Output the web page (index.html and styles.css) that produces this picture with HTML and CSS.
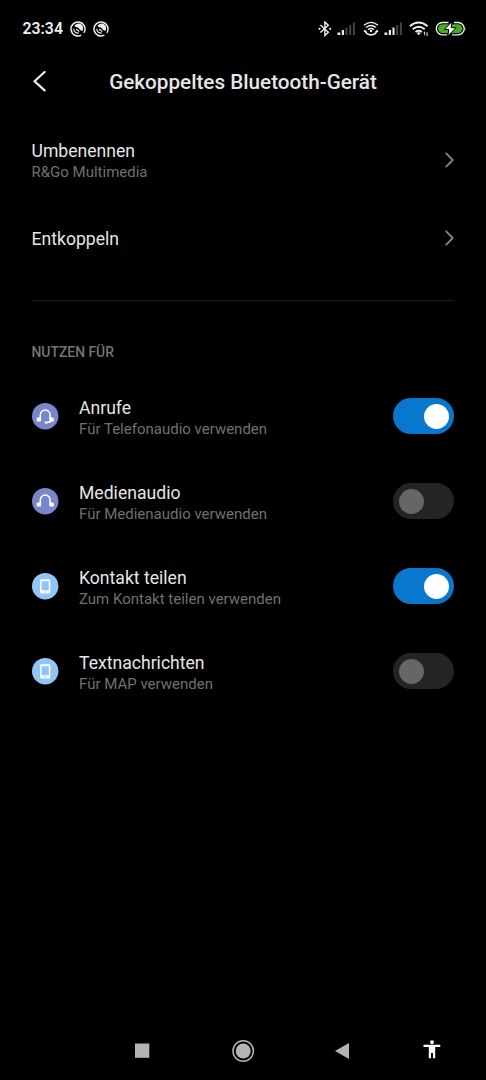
FILE: index.html
```html
<!DOCTYPE html>
<html lang="de">
<head>
<meta charset="utf-8">
<title>Gekoppeltes Bluetooth-Gerät</title>
<link rel="stylesheet" href="styles.css">
</head>
<body>
<div class="screen">
  <div class="status">
    <span class="clock">23:34</span>
    <svg class="app-mark" width="16" height="16" viewBox="0 0 16 16" fill="none" stroke="#eee"><path d="M11.300 14.200A7 7 0 1 1 13.900 11.800" stroke-width="1.500"/><path d="M4.500 4.700A4.700 4.700 0 0 1 12.400 9.900L10.500 9.300L8 6.600L6 6.200Z" fill="#eee" stroke="none"/><path d="M3.700 7.800C3.900 10.400 5.800 12.200 8.800 12.200M6 8.600L7.500 8.800L9.200 10.700" stroke-width="1.200"/></svg>
    <svg class="app-mark" width="16" height="16" viewBox="0 0 16 16" fill="none" stroke="#eee"><path d="M11.300 14.200A7 7 0 1 1 13.900 11.800" stroke-width="1.500"/><path d="M4.500 4.700A4.700 4.700 0 0 1 12.400 9.900L10.500 9.300L8 6.600L6 6.200Z" fill="#eee" stroke="none"/><path d="M3.700 7.800C3.900 10.400 5.800 12.200 8.800 12.200M6 8.600L7.500 8.800L9.200 10.700" stroke-width="1.200"/></svg>
    <div class="indicators">
      <svg width="14" height="16" viewBox="0 0 14 16" fill="none" stroke="#eee" stroke-width="1.400"><path d="M2.400 4L10.300 11.300L6.900 14.500V1L10.300 4.200L2.400 11.500"/><circle cx="1.500" cy="7.800" r="1.100" fill="#eee" stroke="none"/><circle cx="12.200" cy="7.800" r="1.100" fill="#eee" stroke="none"/></svg>
      <svg class="gap-a" width="19" height="16" viewBox="0 0 19 16"><path d="M0.500 11.500h2.800v2.500h-2.800zM4.800 9h2.200v5H4.800z" fill="#eee"/><path d="M8.500 6.500h2v7.500H8.500zM12.200 4h2v10h-2zM15.900 1.500h2v12.500h-2z" fill="#444"/></svg>
      <svg class="gap-b" width="16" height="16" viewBox="0 0 16 16" fill="none" stroke="#eee" stroke-width="1.300"><path d="M1 4.200Q8-1.600 15 4.200M3 6.600Q8 2.300 13 6.600M5 8.800Q8 6.200 11 8.800"/><circle cx="8" cy="9.900" r="1.200" fill="#eee" stroke="none"/><path d="M2 9.800Q3.500 13.900 8 13.900T14 9.800" stroke-width="1.700"/><path d="M.5 11L1.600 8.700L4.200 10.500ZM15.500 11L14.400 8.700L11.800 10.500Z" fill="#eee" stroke="none"/></svg>
      <svg class="gap-c" width="19" height="16" viewBox="0 0 19 16"><path d="M0.500 11.500h2.800v2.500h-2.800zM4.800 9h2.200v5H4.800zM8.500 6.500h2v7.500H8.500z" fill="#eee"/><path d="M12.200 4h2v10h-2zM15.900 1.500h2v12.500h-2z" fill="#444"/></svg>
      <svg class="gap-d" width="20" height="16" viewBox="0 0 20 16" fill="none" stroke="#eee" stroke-width="1.900"><path d="M.8 5.200Q9.700-2.300 18.600 5.200M3.700 8.200Q9.700 3.300 15.700 8.200M6.500 11Q9.700 8.500 12.900 11"/><path d="M9.700 14.300L7.600 12Q9.700 10.400 11.800 12Z" fill="#eee" stroke="none"/><path d="M15.600 10.700v3.600M14.800 12l.8-1M18 11v3.800M18 14.600l.9-1" stroke-width=".9"/></svg>
      <svg class="gap-e" width="32" height="16" viewBox="0 0 32 16"><path d="M13.500 1.500H7.500a6.200 6.200 0 0 0 0 12.400H12.500M19 1.500h4a6.200 6.200 0 0 1 0 12.400H17" fill="none" stroke="#eee" stroke-width="1.400"/><path d="M7.500 3.300a4.400 4.400 0 0 0 0 8.800h15.500a4.400 4.400 0 0 0 0-8.800Z" fill="#47ad1f"/><path d="M17 .5L9.500 8.400H13.800L12.800 15L21 6.700H16.200Z" fill="#fff" stroke="#000" stroke-width="1"/><path d="M29.800 5.500a5 5 0 0 1 0 4.400Z" fill="#eee"/></svg>
    </div>
  </div>
  <header class="header">
    <svg class="back" width="16" height="22" viewBox="0 0 16 22"><path d="M12.600 1L2.500 10.200L12.600 19.400" fill="none" stroke="#eee" stroke-width="2.200" stroke-linecap="round" stroke-linejoin="round"/></svg>
    <h1 class="title">Gekoppeltes Bluetooth-Gerät</h1>
  </header>
  <div class="row row-rename">
    <div class="label"><div class="name">Umbenennen</div><div class="detail">R&amp;Go Multimedia</div></div>
    <svg class="chevron" width="9" height="16" viewBox="0 0 9 16"><path d="M1.200 1.300L7.700 8L1.200 14.700" /></svg>
  </div>
  <div class="row row-unpair">
    <div class="label"><div class="name">Entkoppeln</div></div>
    <svg class="chevron" width="9" height="16" viewBox="0 0 9 16"><path d="M1.200 1.300L7.700 8L1.200 14.700" /></svg>
  </div>
  <div class="divider"></div>
  <h2 class="section">NUTZEN FÜR</h2>
  <div class="row profile">
    <svg class="badge" width="27" height="27" viewBox="0 0 27 27"><circle cx="13.200" cy="13.200" r="13.200" fill="#7986cb"/><path d="M8.300 17.500V12a4.900 4.900 0 0 1 9.800 0V17.500M19.500 18Q18.500 19.400 15 19.400" fill="none" stroke="#fff" stroke-width="1.500"/><path d="M6.500 14.300h2.300v4.200H6.500zM17.600 14.300h2.300v4.200h-2.300zM4.700 14.800h1.800v3.700H4.700zM19.900 14.800h1.800v3.700h-1.800zM12.600 18.500h3v1.900h-3z" fill="#fff"/></svg>
    <div class="label"><div class="name">Anrufe</div><div class="detail">Für Telefonaudio verwenden</div></div>
    <div class="switch on"></div>
  </div>
  <div class="row profile">
    <svg class="badge" width="27" height="27" viewBox="0 0 27 27"><circle cx="13.200" cy="13.200" r="13.200" fill="#7986cb"/><path d="M8.300 17.500V12a4.900 4.900 0 0 1 9.800 0V17.500" fill="none" stroke="#fff" stroke-width="1.500"/><path d="M6.500 14.300h2.300v4.200H6.500zM17.600 14.300h2.300v4.200h-2.300zM4.700 14.800h1.800v3.700H4.700zM19.900 14.800h1.800v3.700h-1.800z" fill="#fff"/></svg>
    <div class="label"><div class="name">Medienaudio</div><div class="detail">Für Medienaudio verwenden</div></div>
    <div class="switch"></div>
  </div>
  <div class="row profile">
    <svg class="badge" width="27" height="27" viewBox="0 0 27 27"><circle cx="13.200" cy="13.200" r="13.200" fill="#90c5f5"/><path fill="#fff" fill-rule="evenodd" d="M9.300 6.300h7.800q1.200 0 1.200 1.200v11.800q0 1.200-1.200 1.200H9.300q-1.200 0-1.200-1.200V7.500q0-1.200 1.200-1.200zM9.600 8.200v9h7.200V8.200zM12.200 18.400v1h2v-1z"/></svg>
    <div class="label"><div class="name">Kontakt teilen</div><div class="detail">Zum Kontakt teilen verwenden</div></div>
    <div class="switch on"></div>
  </div>
  <div class="row profile">
    <svg class="badge" width="27" height="27" viewBox="0 0 27 27"><circle cx="13.200" cy="13.200" r="13.200" fill="#90c5f5"/><path fill="#fff" fill-rule="evenodd" d="M9.300 6.300h7.800q1.200 0 1.200 1.200v11.800q0 1.200-1.200 1.200H9.300q-1.200 0-1.200-1.200V7.500q0-1.200 1.200-1.200zM9.600 8.200v9h7.200V8.200zM12.200 18.400v1h2v-1z"/></svg>
    <div class="label"><div class="name">Textnachrichten</div><div class="detail">Für MAP verwenden</div></div>
    <div class="switch"></div>
  </div>
  <nav class="nav">
    <svg width="24" height="24" viewBox="0 0 24 24"><rect x="5" y="4.500" width="14.300" height="14.300" fill="#b4b4b4"/></svg>
    <svg class="nav-home" width="24" height="24" viewBox="0 0 24 24"><circle cx="12.200" cy="12" r="10.200" fill="none" stroke="#b4b4b4" stroke-width="1.500"/><circle cx="12.200" cy="12" r="7.500" fill="#b4b4b4"/></svg>
    <svg class="nav-back" width="24" height="24" viewBox="0 0 24 24"><path d="M5 12L19 4V20Z" fill="#b4b4b4"/></svg>
    <svg class="nav-access" width="24" height="24" viewBox="0 0 24 24" fill="#fff"><circle cx="12" cy="3.200" r="1.900"/><path d="M3.500 5.700H20.300V8H15.200V19.300H13V14H11V19.300H8.800V8H3.500Z"/></svg>
  </nav>
</div>
</body>
</html>
```
FILE: styles.css
```css
* { box-sizing: border-box; }
body { margin: 0; background: #000; color: #e6e6e6; font-family: Roboto, sans-serif; }
svg { display: block; flex: none; }
.screen { height: 1080px; display: flex; flex-direction: column; }
.status { height: 56px; display: flex; align-items: center; padding: 1px 19.500px 0 22.500px; }
.clock { width: 47.500px; font-size: 15.800px; font-weight: 600; line-height: 20px; color: #eee; }
.app-mark { margin-right: 6.500px; }
.indicators { margin-left: auto; display: flex; align-items: center; }
.gap-a { margin-left: 5px; }
.gap-b { margin-left: 6.500px; }
.gap-c { margin-left: 5px; }
.gap-d { margin-left: 6px; }
.gap-e { margin-left: 6px; }
.header { height: 52px; display: flex; align-items: center; padding: 0 32px; }
.back { margin-right: -16px; }
.title { flex: 1; margin: 0; text-align: center; font-size: 20.700px; font-weight: 500; line-height: 26px; }
.row { display: flex; align-items: center; padding: 0 32px 0 31.500px; }
.row-rename { height: 87px; margin-top: 8px; }
.row-unpair { height: 70px; }
.label { flex: 1; padding-top: 3px; }
.row-unpair .label { padding-top: 2px; }
.profile .label { padding-top: 5px; }
.name { font-size: 17.600px; line-height: 22px; }
.detail { font-size: 15px; line-height: 21px; color: #707070; }
.chevron { fill: none; stroke: #858585; stroke-width: 1.800; stroke-linecap: round; stroke-linejoin: round; }
.divider { height: 1px; margin: 27px 32px 0; background: #1e1e1e; }
.section { margin: 42px 32px 11.500px 31.500px; font-size: 13.900px; line-height: 19px; font-weight: 500; color: #757575; }
.profile { height: 85px; }
.badge { margin-right: 20.500px; }
.switch { width: 61px; height: 36px; padding: 5.500px; border-radius: 18px; background: #242424; display: flex; }
.switch::before { content: ""; width: 25px; height: 25px; border-radius: 50%; background: #666; }
.switch.on { background: #0877cd; justify-content: flex-end; }
.switch.on::before { background: #fff; }
.nav { margin-top: auto; height: 59px; display: flex; align-items: center; padding-left: 130px; }
.nav-home { margin-left: 77px; }
.nav-back { margin-left: 75px; }
.nav-access { margin-left: 66px; }
```
